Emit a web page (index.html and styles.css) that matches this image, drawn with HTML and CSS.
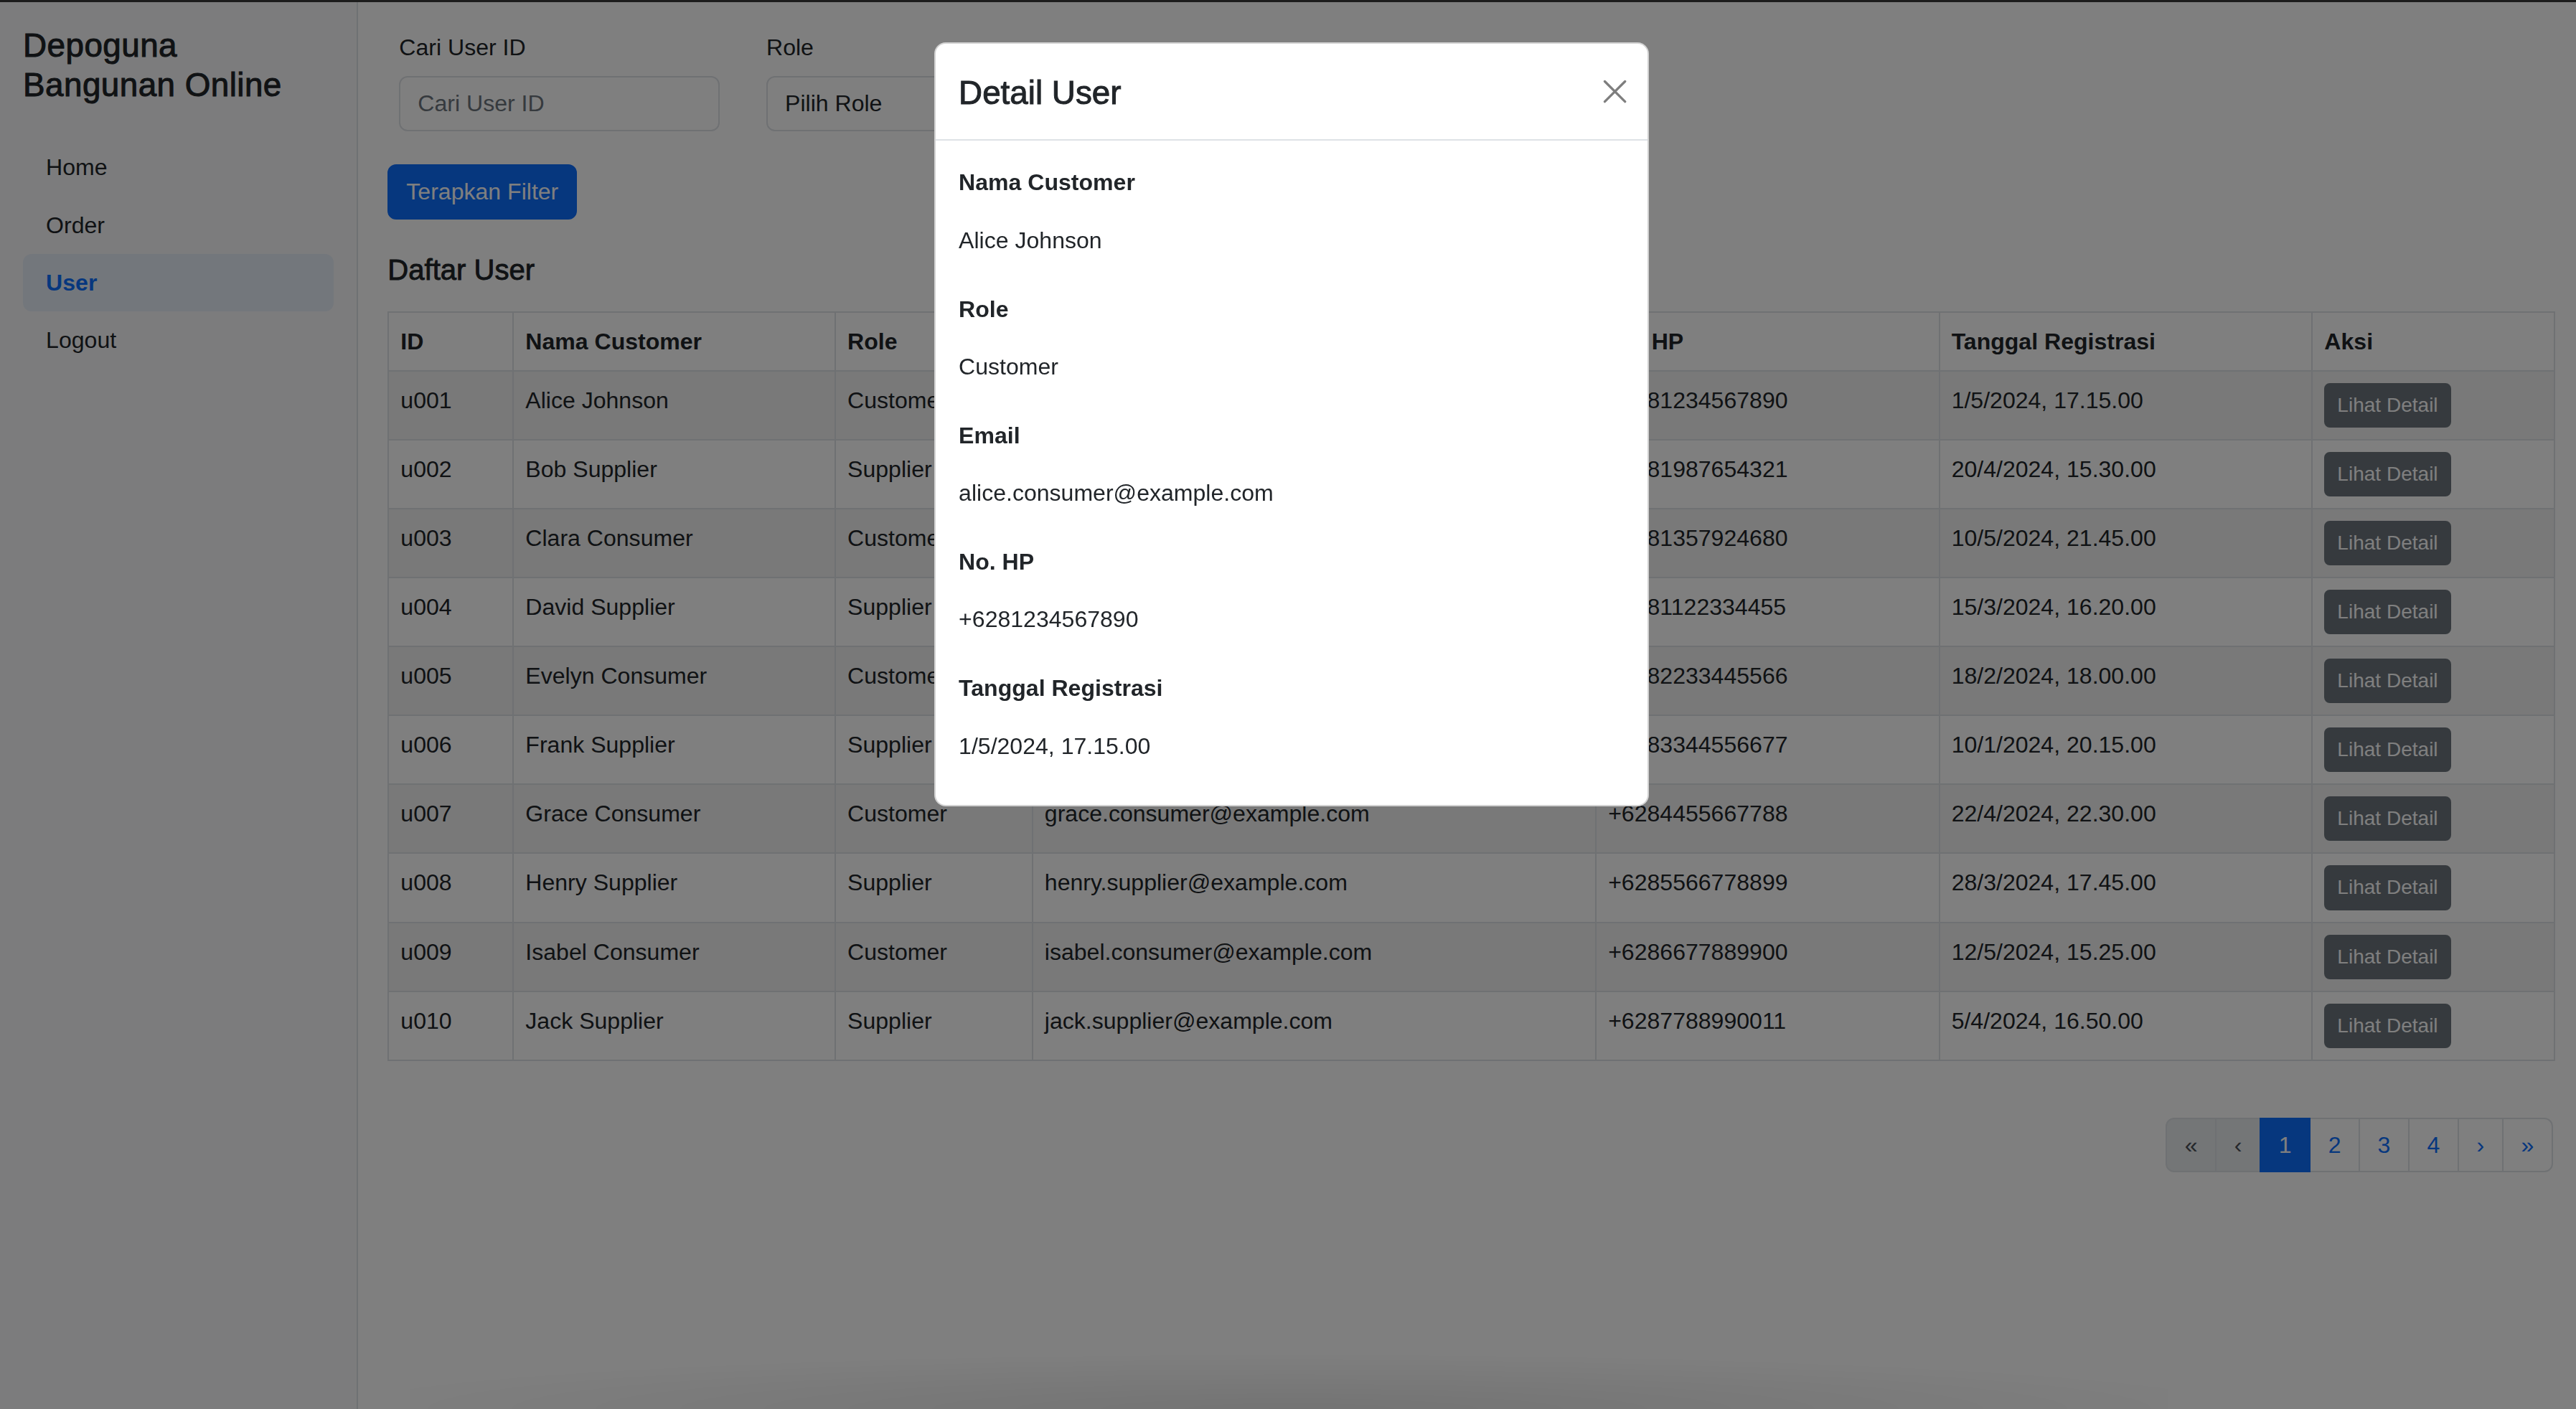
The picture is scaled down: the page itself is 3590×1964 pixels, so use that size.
FILE: index.html
```html
<!DOCTYPE html>
<html lang="id">
<head>
<meta charset="utf-8">
<title>User - Depoguna Bangunan Online</title>
<link rel="stylesheet" href="styles.css">
</head>
<body>
<div class="topline"></div>
<div class="app">
  <aside class="sidebar">
    <h5 class="brand">Depoguna<br>Bangunan Online</h5>
    <nav class="nav">
      <a class="nav-link" href="#">Home</a>
      <a class="nav-link" href="#">Order</a>
      <a class="nav-link active" href="#">User</a>
      <a class="nav-link" href="#">Logout</a>
    </nav>
  </aside>
  <main class="main">
    <div class="filters">
      <div class="filter-group">
        <label class="form-label" for="uid">Cari User ID</label>
        <input id="uid" class="form-control" type="text" placeholder="Cari User ID">
      </div>
      <div class="filter-group">
        <label class="form-label" for="role">Role</label>
        <select id="role" class="form-select"><option>Pilih Role</option></select>
      </div>
    </div>
    <div class="filter-actions">
      <button class="btn btn-primary" type="button">Terapkan Filter</button>
    </div>
    <h5 class="section-title">Daftar User</h5>
    <table class="table">
      <colgroup>
        <col class="c-id"><col class="c-name"><col class="c-role"><col class="c-email"><col class="c-hp"><col class="c-date"><col class="c-act">
      </colgroup>
      <thead>
        <tr><th>ID</th><th>Nama Customer</th><th>Role</th><th>Email</th><th>No. HP</th><th>Tanggal Registrasi</th><th>Aksi</th></tr>
      </thead>
      <tbody>
        <tr><td>u001</td><td>Alice Johnson</td><td>Customer</td><td>alice.consumer@example.com</td><td>+6281234567890</td><td>1/5/2024, 17.15.00</td><td><button class="btn btn-sm btn-secondary" type="button">Lihat Detail</button></td></tr>
        <tr><td>u002</td><td>Bob Supplier</td><td>Supplier</td><td>bob.supplier@example.com</td><td>+6281987654321</td><td>20/4/2024, 15.30.00</td><td><button class="btn btn-sm btn-secondary" type="button">Lihat Detail</button></td></tr>
        <tr><td>u003</td><td>Clara Consumer</td><td>Customer</td><td>clara.consumer@example.com</td><td>+6281357924680</td><td>10/5/2024, 21.45.00</td><td><button class="btn btn-sm btn-secondary" type="button">Lihat Detail</button></td></tr>
        <tr><td>u004</td><td>David Supplier</td><td>Supplier</td><td>david.supplier@example.com</td><td>+6281122334455</td><td>15/3/2024, 16.20.00</td><td><button class="btn btn-sm btn-secondary" type="button">Lihat Detail</button></td></tr>
        <tr><td>u005</td><td>Evelyn Consumer</td><td>Customer</td><td>evelyn.consumer@example.com</td><td>+6282233445566</td><td>18/2/2024, 18.00.00</td><td><button class="btn btn-sm btn-secondary" type="button">Lihat Detail</button></td></tr>
        <tr><td>u006</td><td>Frank Supplier</td><td>Supplier</td><td>frank.supplier@example.com</td><td>+6283344556677</td><td>10/1/2024, 20.15.00</td><td><button class="btn btn-sm btn-secondary" type="button">Lihat Detail</button></td></tr>
        <tr><td>u007</td><td>Grace Consumer</td><td>Customer</td><td>grace.consumer@example.com</td><td>+6284455667788</td><td>22/4/2024, 22.30.00</td><td><button class="btn btn-sm btn-secondary" type="button">Lihat Detail</button></td></tr>
        <tr><td>u008</td><td>Henry Supplier</td><td>Supplier</td><td>henry.supplier@example.com</td><td>+6285566778899</td><td>28/3/2024, 17.45.00</td><td><button class="btn btn-sm btn-secondary" type="button">Lihat Detail</button></td></tr>
        <tr><td>u009</td><td>Isabel Consumer</td><td>Customer</td><td>isabel.consumer@example.com</td><td>+6286677889900</td><td>12/5/2024, 15.25.00</td><td><button class="btn btn-sm btn-secondary" type="button">Lihat Detail</button></td></tr>
        <tr><td>u010</td><td>Jack Supplier</td><td>Supplier</td><td>jack.supplier@example.com</td><td>+6287788990011</td><td>5/4/2024, 16.50.00</td><td><button class="btn btn-sm btn-secondary" type="button">Lihat Detail</button></td></tr>
      </tbody>
    </table>
    <nav class="pager" aria-label="Halaman">
      <ul class="pagination">
        <li class="page-item disabled"><span class="page-link">&laquo;</span></li>
        <li class="page-item disabled"><span class="page-link">&lsaquo;</span></li>
        <li class="page-item active"><span class="page-link">1</span></li>
        <li class="page-item"><a class="page-link" href="#">2</a></li>
        <li class="page-item"><a class="page-link" href="#">3</a></li>
        <li class="page-item"><a class="page-link" href="#">4</a></li>
        <li class="page-item"><a class="page-link" href="#">&rsaquo;</a></li>
        <li class="page-item"><a class="page-link" href="#">&raquo;</a></li>
      </ul>
    </nav>
  </main>
</div>

<div class="backdrop"></div>
<div class="bottom-shade"></div>

<div class="modal" role="dialog" aria-labelledby="modalTitle">
  <div class="modal-header">
    <h5 class="modal-title" id="modalTitle">Detail User</h5>
    <button class="btn-close" type="button" aria-label="Close">
      <svg viewBox="0 0 16 16" width="100%" height="100%"><path d="M1.2 1.2 L14.8 14.8 M14.8 1.2 L1.2 14.8" stroke="#000" stroke-width="1.6" stroke-linecap="round" fill="none"/></svg>
    </button>
  </div>
  <div class="modal-body">
    <p class="detail-label">Nama Customer</p>
    <p class="detail-value">Alice Johnson</p>
    <p class="detail-label">Role</p>
    <p class="detail-value">Customer</p>
    <p class="detail-label">Email</p>
    <p class="detail-value">alice.consumer@example.com</p>
    <p class="detail-label">No. HP</p>
    <p class="detail-value">+6281234567890</p>
    <p class="detail-label">Tanggal Registrasi</p>
    <p class="detail-value">1/5/2024, 17.15.00</p>
  </div>
</div>
</body>
</html>
```

FILE: styles.css
```css
html {
  font-size: 32.0536px;
}

* {
  box-sizing: border-box;
}

body {
  margin: 0;
  font-family: "Liberation Sans", Arial, sans-serif;
  font-size: 1rem;
  line-height: 1.5;
  color: #212529;
  background: #fff;
}

.topline {
  position: fixed;
  top: 0;
  left: 0;
  right: 0;
  height: 3px;
  background: #1c1c1c;
  z-index: 20;
}

.app {
  display: flex;
  min-height: 100vh;
}

/* Sidebar */
.sidebar {
  flex: none;
  width: 15.5714rem;
  background: #f8f9fa;
  border-right: 0.0714rem solid #dee2e6;
  padding: 1rem;
}

.brand {
  margin: 0.1429rem 0 1.4643rem;
  font-size: 1.4286rem;
  font-weight: 500;
  line-height: 1.2;
  letter-spacing: 0.01em;
  color: #212529;
  -webkit-text-stroke: 0.022em currentColor;
}

.nav {
  display: flex;
  flex-direction: column;
}

.nav-link {
  display: block;
  padding: 0.5rem 1rem;
  color: #212529;
  text-decoration: none;
  border-radius: 0.375rem;
}

.nav-link.active {
  background: #e7eef8;
  color: #0d6efd;
  font-weight: 700;
}

/* Main */
.main {
  flex: 1;
  min-width: 0;
  padding: 1.3214rem 1rem 1rem 1.2857rem;
}

.filters {
  display: flex;
  gap: 2.0357rem;
  padding: 0 0.5rem;
}

.filter-group {
  width: 13.9286rem;
}

.form-label {
  display: block;
  margin-bottom: 0.5rem;
}

.form-control,
.form-select {
  display: block;
  width: 100%;
  margin: 0;
  padding: 0.375rem 0.75rem;
  font-family: inherit;
  font-size: 1rem;
  line-height: 1.5;
  color: #212529;
  background: #fff;
  border: 0.0714rem solid #dee2e6;
  border-radius: 0.375rem;
  appearance: none;
  outline: none;
}

.form-control::placeholder {
  color: #6c757d;
}

.filter-actions {
  display: flex;
  margin-top: 1.4643rem;
}

.btn {
  display: inline-block;
  margin: 0;
  padding: 0.375rem 0.75rem;
  font-family: inherit;
  font-size: 1rem;
  line-height: 1.5;
  border: 0.0714rem solid transparent;
  border-radius: 0.375rem;
  cursor: pointer;
}

.btn-primary {
  background: #0d6efd;
  border-color: #0d6efd;
  color: #fff;
}

.btn-sm {
  padding: 0.25rem 0.5rem;
  font-size: 0.875rem;
  border-radius: 0.25rem;
  vertical-align: top;
}

.btn-secondary {
  background: #6c757d;
  border-color: #6c757d;
  color: #fff;
}

.section-title {
  margin: 1.4571rem 0 1.0429rem;
  font-size: 1.25rem;
  font-weight: 500;
  line-height: 1.2;
  -webkit-text-stroke: 0.022em currentColor;
}

/* Table */
.table {
  width: 100%;
  table-layout: fixed;
  border-collapse: collapse;
  border: 0.0714rem solid #dee2e6;
}

.c-id { width: 5.4286rem; }
.c-name { width: 14rem; }
.c-role { width: 8.5714rem; }
.c-email { width: 24.5rem; }
.c-hp { width: 14.9286rem; }
.c-date { width: 16.2143rem; }
.c-act { width: 10.5357rem; }

.table th,
.table td {
  padding: 0.5rem;
  border: 0.0714rem solid #dee2e6;
  text-align: left;
  vertical-align: top;
  white-space: nowrap;
  overflow: hidden;
}

.table th {
  font-weight: 700;
  background: #fff;
}

.table tbody tr:nth-child(odd) td {
  background: #f2f2f2;
}

/* Pagination */
.pager {
  display: flex;
  justify-content: flex-end;
  margin-top: 2.47rem;
}

.pagination {
  display: flex;
  margin: 0;
  padding: 0;
  list-style: none;
}

.page-link {
  display: block;
  margin-left: -0.0714rem;
  padding: 0.375rem 0.7714rem;
  color: #0d6efd;
  background: #fff;
  border: 0.0714rem solid #dee2e6;
  text-decoration: none;
  line-height: 1.5;
}

.page-item:first-child .page-link {
  margin-left: 0;
  border-radius: 0.375rem 0 0 0.375rem;
}

.page-item:last-child .page-link {
  border-radius: 0 0.375rem 0.375rem 0;
}

.page-item.disabled .page-link {
  color: #495057;
  background: #e9ecef;
}

.page-item.active .page-link {
  position: relative;
  color: #fff;
  background: #0d6efd;
  border-color: #0d6efd;
}

/* Modal overlay */
.backdrop {
  position: fixed;
  inset: 0;
  background: rgba(0, 0, 0, 0.5);
  z-index: 10;
}

.bottom-shade {
  position: fixed;
  left: 17.857rem;
  width: 76.43rem;
  bottom: 0;
  height: 2.4rem;
  background: radial-gradient(ellipse 55% 100% at 50% 100%, rgba(0, 0, 0, 0.09), rgba(0, 0, 0, 0));
  z-index: 12;
  pointer-events: none;
}

.modal {
  position: fixed;
  top: 1.85rem;
  left: 40.621rem;
  width: 31.0714rem;
  background: #fff;
  border: 0.0714rem solid rgba(0, 0, 0, 0.175);
  border-radius: 0.5rem;
  z-index: 11;
}

.modal-header {
  display: flex;
  align-items: center;
  padding: 1.0714rem 1rem 0.9286rem;
  border-bottom: 0.0714rem solid #dee2e6;
}

.modal-title {
  margin: 0;
  font-size: 1.4286rem;
  font-weight: 500;
  line-height: 1.5;
  -webkit-text-stroke: 0.022em currentColor;
}

.btn-close {
  display: block;
  flex: none;
  width: 1.0357rem;
  height: 1.0357rem;
  margin: -0.1429rem -0.0929rem 0 auto;
  padding: 0;
  border: 0;
  background: none;
  opacity: 0.5;
  cursor: pointer;
}

.btn-close svg {
  display: block;
}

.modal-body {
  padding: 1.0714rem 1rem 1rem;
}

.detail-label {
  margin: 0 0 1rem;
  font-weight: 700;
}

.detail-value {
  margin: 0 0 1.5rem;
}

.detail-value:last-child {
  margin-bottom: 0.8214rem;
}
```
